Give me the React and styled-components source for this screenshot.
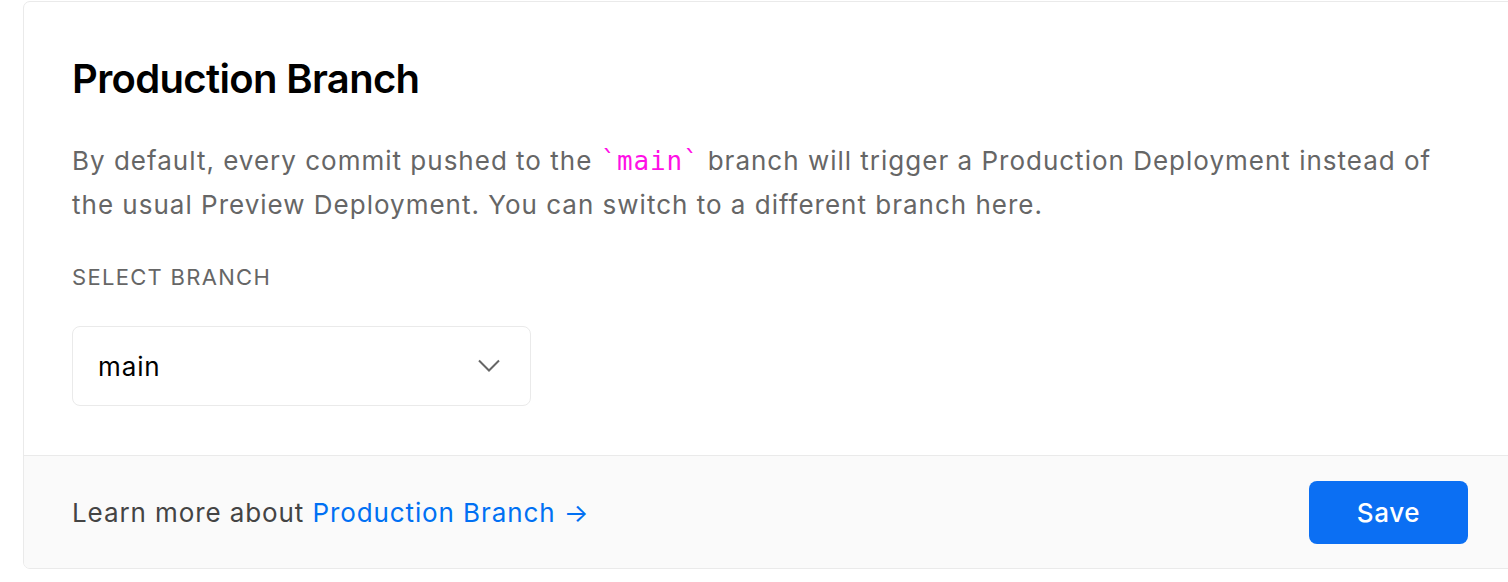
import React from 'react'
import styled, { createGlobalStyle } from 'styled-components'

const GlobalStyle = createGlobalStyle`
    body {
        margin: 0;
        background: #fff;
        font-family: 'Inter', 'Noto Sans', sans-serif;
    }
`;

export default function App () {
    return (
        <>
            <GlobalStyle />
            <Page>
                <Card>
                    <CardBody>
                        <Title>Production Branch</Title>
                        <Description>
                            By default, every commit pushed to the <Code>`main`</Code> branch will trigger a Production Deployment instead of the usual Preview Deployment. You can switch to a different branch here.
                        </Description>
                        <Label>SELECT BRANCH</Label>
                        <Select>
                            <span>main</span>
                            <svg width="24" height="14" viewBox="0 0 24 14" fill="none">
                                <path d="M2 1.5 L12 11.5 L22 1.5" stroke="#666" strokeWidth="2" />
                            </svg>
                        </Select>
                    </CardBody>
                    <Footer>
                        <FooterText>
                            Learn more about <Link href="#">Production Branch →</Link>
                        </FooterText>
                        <SaveButton>Save</SaveButton>
                    </Footer>
                </Card>
            </Page>
        </>
    );
}

const Page = styled.main `
    padding: 1px 0 0 23px;
`;

const Card = styled.section `
    width: 1494px;
    border: 1px solid #eaeaea;
    border-radius: 7px;
    overflow: hidden;
    background: #fff;
`;

const CardBody = styled.div `
    padding: 53px 48px 49px;
    display: flex;
    flex-direction: column;
    align-items: flex-start;
`;

const Title = styled.h2 `
    margin: 0;
    font-size: 40px;
    line-height: 48px;
    font-weight: 600;
    color: #000;
    letter-spacing: -0.65px;
`;

const Description = styled.p `
    margin: 36px 0 0;
    font-size: 26px;
    line-height: 44px;
    color: #666;
    letter-spacing: 1px;
    max-width: 1380px;
`;

const Code = styled.code `
    font-family: 'DejaVu Sans Mono', 'Liberation Mono', monospace;
    font-size: 26px;
    letter-spacing: 0.8px;
    color: #ff0fe6;
`;

const Label = styled.div `
    margin-top: 34px;
    font-size: 22px;
    line-height: 32px;
    letter-spacing: 1.3px;
    color: #666;
`;

const Select = styled.div `
    margin-top: 33px;
    box-sizing: border-box;
    width: 459px;
    height: 80px;
    border: 1px solid #eaeaea;
    border-radius: 8px;
    display: flex;
    align-items: center;
    justify-content: space-between;
    padding: 0 29px 0 25px;
    font-size: 26px;
    letter-spacing: 0.9px;
    color: #000;
`;

const Footer = styled.footer `
    border-top: 1px solid #eaeaea;
    background: #fafafa;
    height: 113px;
    box-sizing: border-box;
    padding: 0 50px 0 48px;
    display: flex;
    align-items: center;
    justify-content: space-between;
`;

const FooterText = styled.div `
    font-size: 26px;
    letter-spacing: 0.9px;
    color: #444;
`;

const Link = styled.a `
    color: #0070f3;
    text-decoration: none;
`;

const SaveButton = styled.button `
    width: 159px;
    height: 63px;
    border: none;
    border-radius: 8px;
    background: #0b6ff3;
    color: #fff;
    font-family: 'Inter', sans-serif;
    font-size: 26px;
    font-weight: 500;
    letter-spacing: 0.6px;
`;
